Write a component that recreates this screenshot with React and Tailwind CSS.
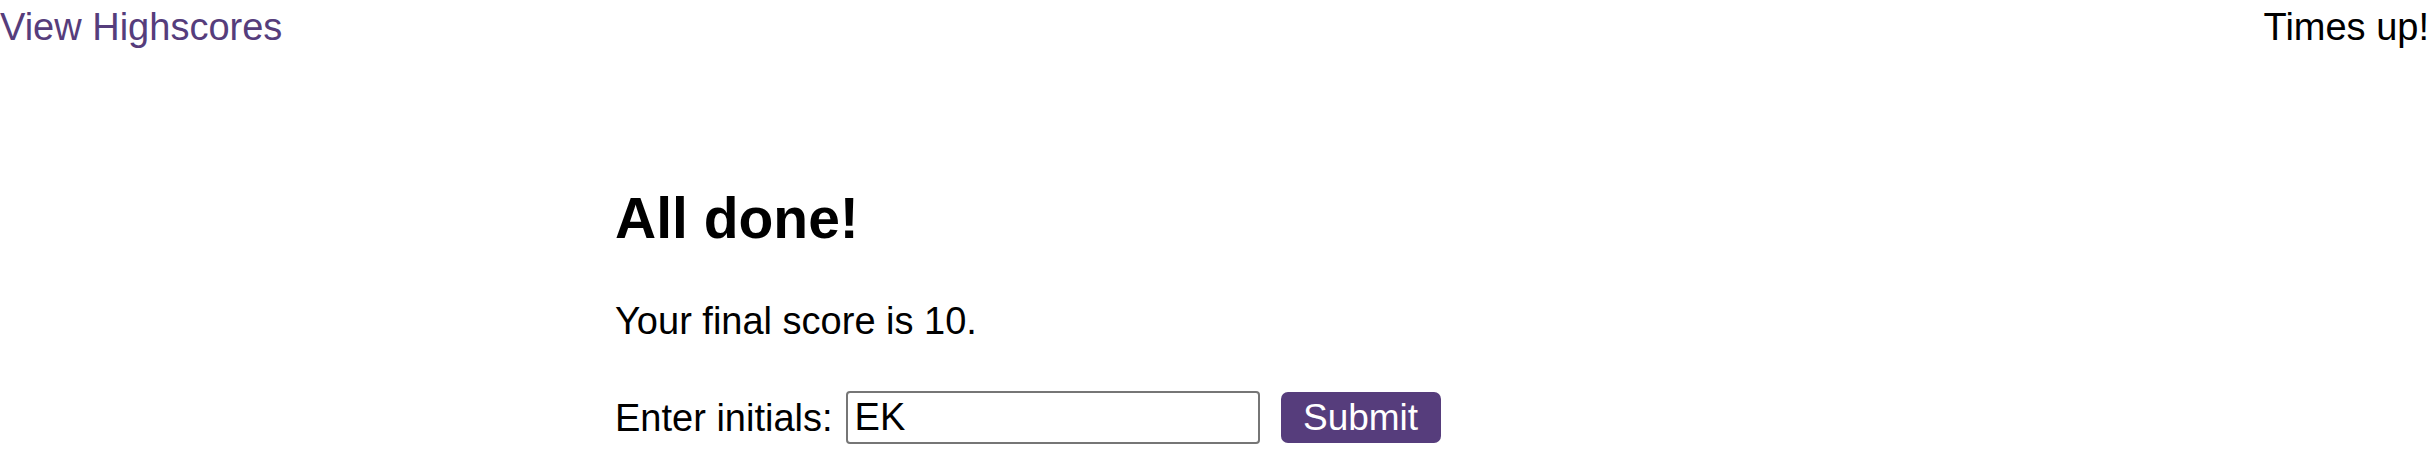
export default function App() {
  return (
    <div className="w-[2436px] h-[462px] bg-white text-black overflow-hidden" style={{ fontFamily: '"Liberation Sans", Arial, sans-serif' }}>
      <header className="flex justify-between items-start pt-[5px] pr-[7px] text-[38px] leading-[44px]">
        <a href="#" className="text-[#563d7c] no-underline">View Highscores</a>
        <div>Times up!</div>
      </header>
      <main className="w-[1206px] mx-auto pt-[136px]">
        <h2 className="text-[57px] leading-[66px] font-bold">All done!</h2>
        <p className="mt-[48px] text-[38px] leading-[44px]">Your final score is 10.</p>
        <div className="mt-[48px] flex items-center h-[53px] text-[38px] leading-[44px]">
          <label>Enter initials:</label>
          <input
            type="text"
            defaultValue="EK"
            className="ml-[13px] w-[414px] h-[53px] border-2 border-[#767676] rounded-[4px] px-[7px] text-[38px] leading-[44px] bg-white text-black outline-none"
            style={{ fontFamily: '"Liberation Sans", Arial, sans-serif' }}
          />
          <button className="ml-[21px] w-[160px] h-[51px] rounded-[7px] bg-[#563d7c] text-white text-[37px] leading-[44px] flex items-center justify-center">
            Submit
          </button>
        </div>
      </main>
    </div>
  );
}
